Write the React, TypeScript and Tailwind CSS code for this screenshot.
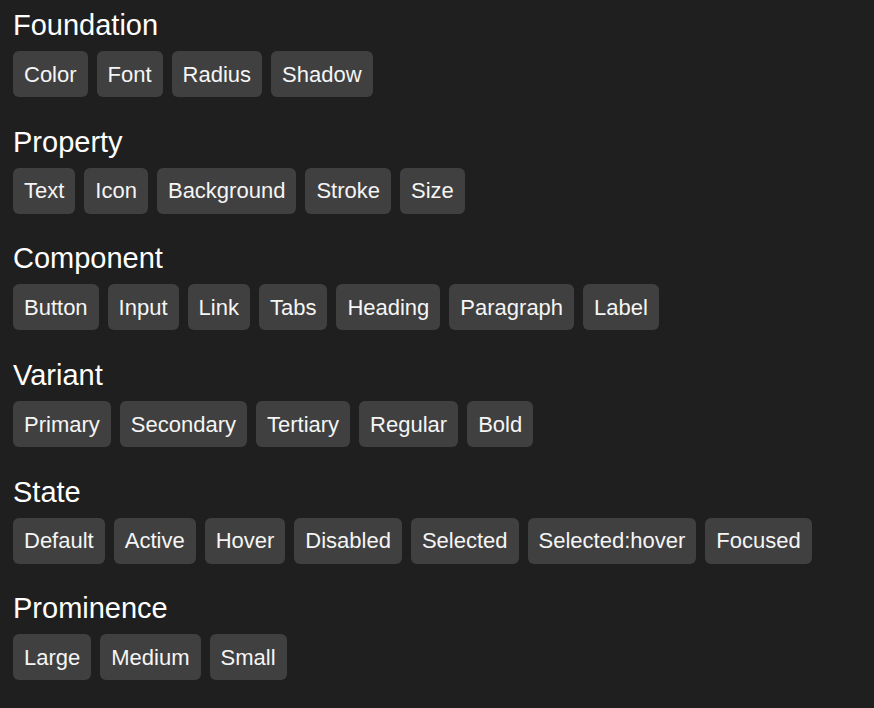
const groups: { title: string; items: string[] }[] = [
  { title: "Foundation", items: ["Color", "Font", "Radius", "Shadow"] },
  { title: "Property", items: ["Text", "Icon", "Background", "Stroke", "Size"] },
  {
    title: "Component",
    items: ["Button", "Input", "Link", "Tabs", "Heading", "Paragraph", "Label"],
  },
  { title: "Variant", items: ["Primary", "Secondary", "Tertiary", "Regular", "Bold"] },
  {
    title: "State",
    items: ["Default", "Active", "Hover", "Disabled", "Selected", "Selected:hover", "Focused"],
  },
  { title: "Prominence", items: ["Large", "Medium", "Small"] },
];

export default function App() {
  return (
    <div className="min-h-screen bg-[#1f1f1f] text-white font-['Liberation_Sans',Arial,sans-serif] px-[13px] pt-[9px]">
      <div className="flex flex-col gap-[28.7px]">
        {groups.map((group) => (
          <section key={group.title}>
            <h2 className="text-[29px] leading-[32px] mb-[10px]">{group.title}</h2>
            <div className="flex gap-[9px]">
              {group.items.map((item) => (
                <span
                  key={item}
                  className="h-[46px] flex items-center px-[11px] rounded-[6px] bg-[#404040] text-[22px] text-[#f5f5f5]"
                >
                  {item}
                </span>
              ))}
            </div>
          </section>
        ))}
      </div>
    </div>
  );
}
